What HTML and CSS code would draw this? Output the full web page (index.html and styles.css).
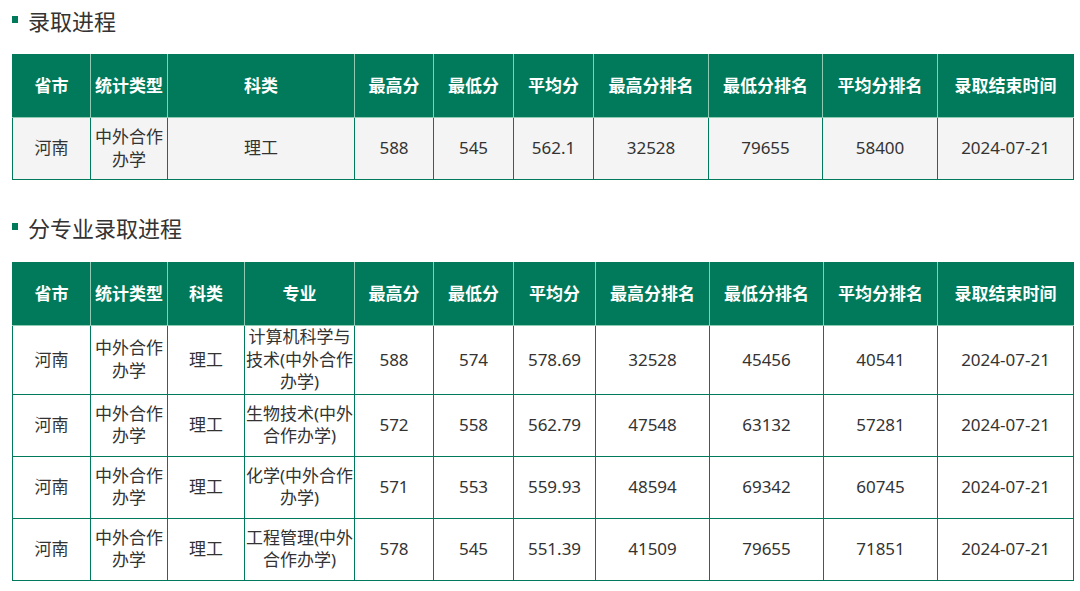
FILE: index.html
```html
<!DOCTYPE html>
<html lang="zh-CN">
<head>
<meta charset="utf-8">
<title>录取进程</title>
<link rel="stylesheet" href="styles.css">
</head>
<body>
<div class="page">
  <h2 class="section-title"><span class="marker"></span>录取进程</h2>
  <table class="data-table t1">
    <colgroup>
      <col style="width:78px"><col style="width:77px"><col style="width:187px"><col style="width:79px"><col style="width:80px"><col style="width:80px"><col style="width:115px"><col style="width:114px"><col style="width:115px"><col style="width:136px">
    </colgroup>
    <thead>
      <tr><th>省市</th><th>统计类型</th><th>科类</th><th>最高分</th><th>最低分</th><th>平均分</th><th>最高分排名</th><th>最低分排名</th><th>平均分排名</th><th>录取结束时间</th></tr>
    </thead>
    <tbody>
      <tr><td>河南</td><td>中外合作办学</td><td>理工</td><td>588</td><td>545</td><td>562.1</td><td>32528</td><td>79655</td><td>58400</td><td>2024-07-21</td></tr>
    </tbody>
  </table>

  <h2 class="section-title second"><span class="marker"></span>分专业录取进程</h2>
  <table class="data-table t2">
    <colgroup>
      <col style="width:78px"><col style="width:77px"><col style="width:77px"><col style="width:110px"><col style="width:79px"><col style="width:80px"><col style="width:82px"><col style="width:114px"><col style="width:114px"><col style="width:114px"><col style="width:136px">
    </colgroup>
    <thead>
      <tr><th>省市</th><th>统计类型</th><th>科类</th><th>专业</th><th>最高分</th><th>最低分</th><th>平均分</th><th>最高分排名</th><th>最低分排名</th><th>平均分排名</th><th>录取结束时间</th></tr>
    </thead>
    <tbody>
      <tr><td>河南</td><td>中外合作办学</td><td>理工</td><td>计算机科学与技术(中外合作办学)</td><td>588</td><td>574</td><td>578.69</td><td>32528</td><td>45456</td><td>40541</td><td>2024-07-21</td></tr>
      <tr><td>河南</td><td>中外合作办学</td><td>理工</td><td>生物技术(中外合作办学)</td><td>572</td><td>558</td><td>562.79</td><td>47548</td><td>63132</td><td>57281</td><td>2024-07-21</td></tr>
      <tr><td>河南</td><td>中外合作办学</td><td>理工</td><td>化学(中外合作办学)</td><td>571</td><td>553</td><td>559.93</td><td>48594</td><td>69342</td><td>60745</td><td>2024-07-21</td></tr>
      <tr><td>河南</td><td>中外合作办学</td><td>理工</td><td>工程管理(中外合作办学)</td><td>578</td><td>545</td><td>551.39</td><td>41509</td><td>79655</td><td>71851</td><td>2024-07-21</td></tr>
    </tbody>
  </table>
</div>
</body>
</html>
```
FILE: styles.css
```css
html, body {
  margin: 0;
  padding: 0;
  background: #ffffff;
}
body {
  font-family: "Noto Sans", "Noto Sans CJK SC", sans-serif;
  color: #333333;
}
.page {
  padding: 6px 7px 0 12px;
}
.section-title {
  display: flex;
  align-items: center;
  height: 30px;
  margin: 0 0 18px 0;
  font-size: 22px;
  font-weight: normal;
  line-height: 30px;
  color: #333333;
}
.section-title.second {
  margin-top: 33px;
  margin-bottom: 19px;
}
.marker {
  display: inline-block;
  width: 6px;
  height: 7px;
  background: #007a5a;
  margin: 0 10px 4px 0;
}
.data-table {
  width: 1061px;
  table-layout: fixed;
  border-collapse: collapse;
  border: 1px solid #007a5a;
  font-size: 17px;
}
.data-table th {
  background: #007a5a;
  color: #ffffff;
  font-weight: bold;
  height: 62px;
  padding: 0 2px;
  border: 1px solid #8fcab5;
  border-top-color: #007a5a;
  text-align: center;
  vertical-align: middle;
  line-height: 22px;
}
.data-table th:first-child { border-left-color: #007a5a; }
.data-table th:last-child { border-right-color: #007a5a; }
.data-table td {
  height: 61px;
  padding: 0;
  border: 1px solid #007a5a;
  text-align: center;
  vertical-align: middle;
  line-height: 22.5px;
  word-break: break-all;
}
.data-table td:nth-child(2n) {
  border-left-color: #7fbfa8;
}
.t1 td {
  background: #f4f4f4;
}
.t2 td {
  background: #ffffff;
}
```
